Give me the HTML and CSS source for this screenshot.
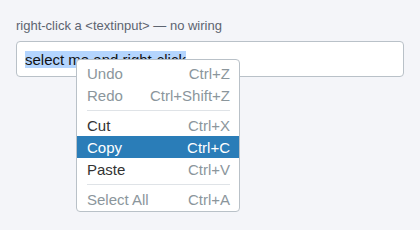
FILE: index.html
```html
<!DOCTYPE html>
<html lang="en">
<head>
  <meta charset="UTF-8">
  <meta name="viewport" content="width=device-width, initial-scale=1.0">
  <title>Text input context menu</title>
  <link rel="stylesheet" href="styles.css">
</head>
<body>
  <div class="demo">
    <div class="label">right-click a &lt;textinput&gt; — no wiring</div>
    <div class="field"><span class="selected">select me and right-click</span></div>

    <div class="menu">
      <div class="item disabled"><span>Undo</span><span class="keys">Ctrl+Z</span></div>
      <div class="item disabled"><span>Redo</span><span class="keys">Ctrl+Shift+Z</span></div>
      <div class="sep"></div>
      <div class="item"><span>Cut</span><span class="keys">Ctrl+X</span></div>
      <div class="item active"><span>Copy</span><span class="keys">Ctrl+C</span></div>
      <div class="item"><span>Paste</span><span class="keys">Ctrl+V</span></div>
      <div class="sep"></div>
      <div class="item disabled"><span>Select All</span><span class="keys">Ctrl+A</span></div>
    </div>
  </div>
</body>
</html>
```

FILE: styles.css
```css
html, body {
  height: 100%;
}

body {
  margin: 0;
  background-color: #f4f5f9;
  font-family: "Liberation Sans", Arial, sans-serif;
}

.demo {
  position: relative;
  box-sizing: border-box;
  min-height: 100%;
  padding: 18px 16px;
}

.label {
  font-size: 13px;
  line-height: 15px;
  color: #5d6470;
  margin-bottom: 8px;
}

.field {
  box-sizing: border-box;
  height: 36px;
  background-color: #fff;
  border: 1px solid #b9c1c8;
  border-radius: 4px;
  padding: 0 8px;
  display: flex;
  align-items: center;
  font-size: 15px;
  color: #111;
}

.selected {
  background-color: #b4d5fe;
}

.menu {
  position: absolute;
  left: 76px;
  top: 59px;
  width: 164px;
  box-sizing: border-box;
  background-color: #fff;
  border: 1px solid #b9c1c8;
  border-radius: 4px;
  padding: 2px 0 1px;
  font-size: 15px;
}

.item {
  display: flex;
  justify-content: space-between;
  align-items: center;
  height: 22px;
  padding: 0 9px 0 10px;
  color: #333;
}

.item .keys {
  color: #8b969c;
}

.item.disabled {
  color: #8b969c;
}

.item.active {
  background-color: #2a7db8;
  color: #fff;
}

.item.active .keys {
  color: #fff;
}

.sep {
  height: 1px;
  background-color: #dfe3e7;
  margin: 4px 9px 3px 10px;
}
```
